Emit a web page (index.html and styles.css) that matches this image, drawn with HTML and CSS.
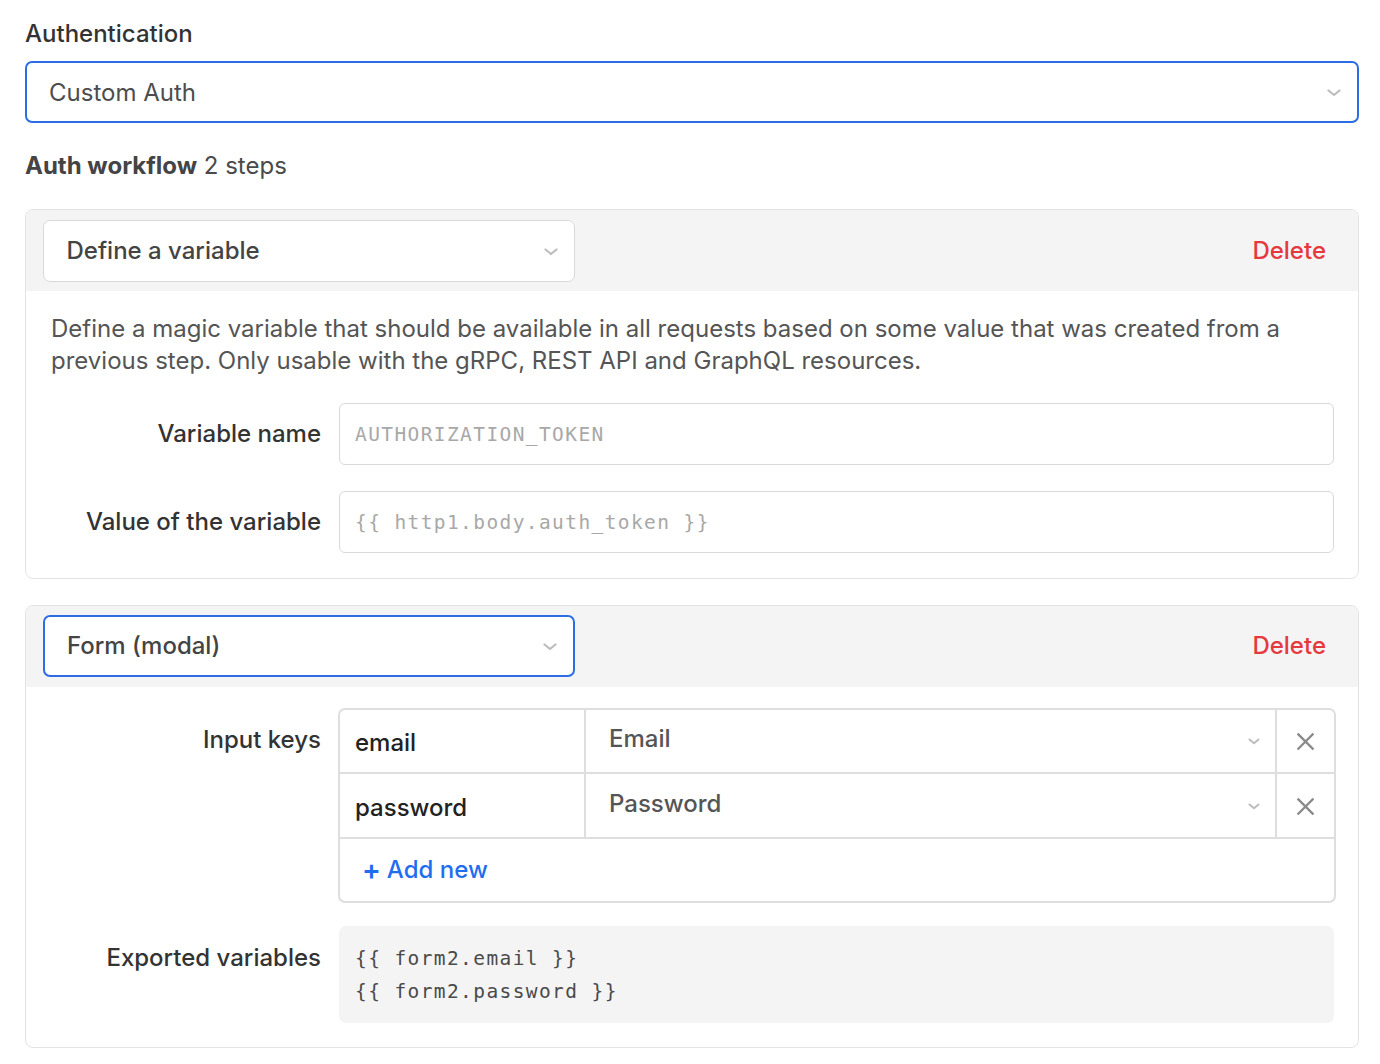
FILE: index.html
```html
<!DOCTYPE html>
<html>
<head>
<meta charset="utf-8">
<link rel="stylesheet" href="styles.css">
</head>
<body>
<div class="page">
  <div class="field-label">Authentication</div>
  <div class="select select-main focused">
    <span class="select-text">Custom Auth</span>
    <svg class="chev" width="14" height="8" viewBox="0 0 14 8"><polyline points="1.5,1.5 7,6 12.5,1.5" fill="none" stroke="#bdbdbd" stroke-width="2.2" stroke-linecap="round" stroke-linejoin="round"/></svg>
  </div>
  <div class="workflow-title"><b>Auth workflow</b> 2 steps</div>

  <div class="card">
    <div class="card-head">
      <div class="select select-step">
        <span class="select-text">Define a variable</span>
        <svg class="chev" width="14" height="8" viewBox="0 0 14 8"><polyline points="1.5,1.5 7,6 12.5,1.5" fill="none" stroke="#bdbdbd" stroke-width="2.2" stroke-linecap="round" stroke-linejoin="round"/></svg>
      </div>
      <span class="delete">Delete</span>
    </div>
    <div class="card-body">
      <p class="desc">Define a magic variable that should be available in all requests based on some value that was created from a previous step. Only usable with the gRPC, REST API and GraphQL resources.</p>
      <div class="row">
        <div class="row-label">Variable name</div>
        <div class="input mono placeholder">AUTHORIZATION_TOKEN</div>
      </div>
      <div class="row">
        <div class="row-label">Value of the variable</div>
        <div class="input mono placeholder">{{ http1.body.auth_token }}</div>
      </div>
    </div>
  </div>

  <div class="card">
    <div class="card-head head2">
      <div class="select select-step focused-thin">
        <span class="select-text">Form (modal)</span>
        <svg class="chev" width="14" height="8" viewBox="0 0 14 8"><polyline points="1.5,1.5 7,6 12.5,1.5" fill="none" stroke="#bdbdbd" stroke-width="2.2" stroke-linecap="round" stroke-linejoin="round"/></svg>
      </div>
      <span class="delete">Delete</span>
    </div>
    <div class="card-body body2">
      <div class="row row-top">
        <div class="row-label label-keys">Input keys</div>
        <div class="keys">
          <div class="key-row">
            <div class="key-name">email</div>
            <div class="key-type">
              <span>Email</span>
              <svg class="chev small" width="12" height="7" viewBox="0 0 12 7"><polyline points="1.5,1.5 6,5.2 10.5,1.5" fill="none" stroke="#bdbdbd" stroke-width="2" stroke-linecap="round" stroke-linejoin="round"/></svg>
            </div>
            <div class="key-del"><svg width="19" height="19" viewBox="0 0 20 20"><path d="M2.5 2.5 L17.5 17.5 M17.5 2.5 L2.5 17.5" stroke="#8a8a8a" stroke-width="2.4" stroke-linecap="square"/></svg></div>
          </div>
          <div class="key-row">
            <div class="key-name">password</div>
            <div class="key-type">
              <span>Password</span>
              <svg class="chev small" width="12" height="7" viewBox="0 0 12 7"><polyline points="1.5,1.5 6,5.2 10.5,1.5" fill="none" stroke="#bdbdbd" stroke-width="2" stroke-linecap="round" stroke-linejoin="round"/></svg>
            </div>
            <div class="key-del"><svg width="19" height="19" viewBox="0 0 20 20"><path d="M2.5 2.5 L17.5 17.5 M17.5 2.5 L2.5 17.5" stroke="#8a8a8a" stroke-width="2.4" stroke-linecap="square"/></svg></div>
          </div>
          <div class="add-new"><span class="plus">+</span> Add new</div>
        </div>
      </div>
      <div class="row row-top">
        <div class="row-label label-exp">Exported variables</div>
        <div class="exported mono">
          <div>{{ form2.email }}</div>
          <div>{{ form2.password }}</div>
        </div>
      </div>
    </div>
  </div>
</div>
</body>
</html>
```

FILE: styles.css
```css
* { box-sizing: border-box; }
html, body { margin: 0; padding: 0; background: #fff; }
body {
  font-family: Inter, "Noto Sans", "Liberation Sans", sans-serif;
  font-size: 24px;
  color: #333;
}
.page {
  padding: 19px 21px 0 25px;
}
.field-label {
  line-height: 29px;
  font-weight: 500;
  color: #333;
  margin-bottom: 13px;
}
.select {
  display: flex;
  align-items: center;
  justify-content: space-between;
  background: #fff;
  border-radius: 7px;
}
.select-main {
  height: 62px;
  border: 2px solid #2c6de6;
  padding: 0 16px 0 22px;
}
.select-text { color: #4d4d4d; }
.chev { flex: none; margin-top: 2px; }
.workflow-title {
  margin-top: 28px;
  line-height: 29px;
  color: #4a4a4a;
}
.workflow-title b { font-weight: 700; color: #444; }

.card {
  margin-top: 29px;
  border: 1.5px solid #e3e3e3;
  border-radius: 8px;
  overflow: hidden;
}
.card + .card { margin-top: 26px; }
.card-head {
  height: 81px;
  background: #f4f4f4;
  display: flex;
  align-items: center;
  justify-content: space-between;
  padding: 0 32px 0 16.5px;
}
.head2 { padding-bottom: 2px; }
.select-step {
  width: 532px;
  height: 62px;
  border: 1.5px solid #d9d9d9;
  padding: 0 16px 0 23px;
}
.select-step .select-text { color: #444; font-weight: 500; }
.focused-thin { border: 2px solid #2c6de6; padding-left: 22.5px; }
.delete {
  color: #e5393d;
  font-weight: 500;
}
.card-body {
  padding: 22px 24px 25px 25px;
}
.desc {
  margin: 0 0 26px 0;
  line-height: 32px;
  color: #555;
}
.row {
  display: flex;
  align-items: center;
  gap: 18px;
}
.row + .row { margin-top: 26px; }
.row-top { align-items: flex-start; }
.row-label {
  width: 270px;
  flex: none;
  text-align: right;
  font-weight: 500;
  color: #333;
  line-height: 28px;
}
.input {
  flex: 1;
  height: 62px;
  border: 1.5px solid #d9d9d9;
  border-radius: 6px;
  display: flex;
  align-items: center;
  padding-left: 15px;
}
.mono {
  font-family: "DejaVu Sans Mono", "Liberation Mono", monospace;
  font-size: 19.5px;
  letter-spacing: 1.4px;
}
.placeholder { color: #a8a8a8; }

.body2 { padding-top: 20.5px; padding-bottom: 24px; }
.label-keys { margin-top: 18px; }
.keys {
  flex: 1;
  margin-left: -1px;
  margin-right: -2px;
  border: 2px solid #dedede;
  border-radius: 7px;
}
.key-row {
  display: flex;
  height: 64.5px;
  border-bottom: 2px solid #dedede;
}
.key-name {
  width: 246px;
  flex: none;
  border-right: 2px solid #dedede;
  display: flex;
  align-items: center;
  padding: 4px 0 0 15px;
  color: #222;
  font-weight: 500;
}
.key-type {
  flex: 1;
  display: flex;
  align-items: center;
  justify-content: space-between;
  padding: 0 15px 4px 23px;
  color: #555;
  font-weight: 500;
  border-right: 2px solid #dedede;
}
.key-type .chev { margin-top: 6px; }
.key-del {
  width: 57px;
  flex: none;
  display: flex;
  align-items: center;
  justify-content: center;
  padding-top: 2px;
}
.add-new {
  height: 62px;
  display: flex;
  align-items: center;
  padding-left: 22px;
  color: #1f6ef0;
  font-weight: 500;
  font-size: 24px;
}
.plus { font-size: 28px; font-weight: 600; margin-right: 6px; line-height: 1; }
.row + .row.row-top { margin-top: 23px; }
.label-exp { margin-top: 18px; }
.exported {
  flex: 1;
  background: #f4f4f4;
  border-radius: 7px;
  padding: 16px 16px 15px 16px;
  line-height: 33px;
  color: #4a4a4a;
}
```
